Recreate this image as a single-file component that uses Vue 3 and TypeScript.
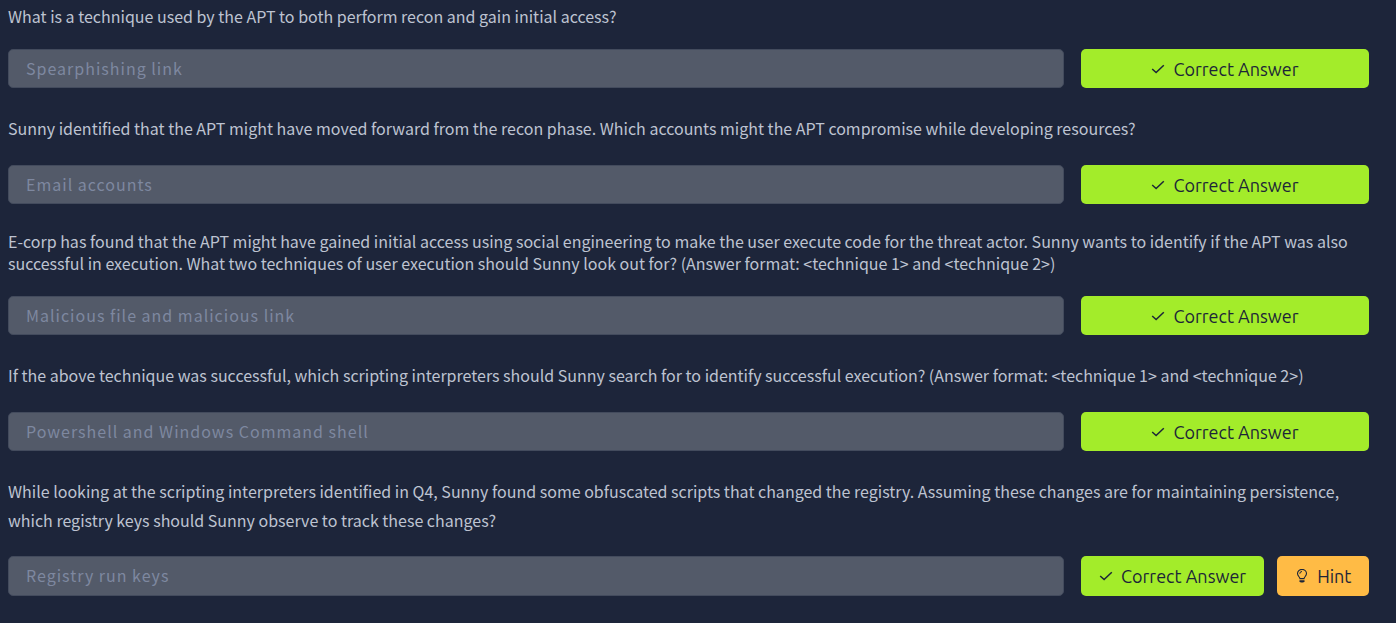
<script setup lang="ts">
interface Question {
  id: number
  text: string
  answer: string
  relaxed: boolean
  hint: boolean
}

const questions: Question[] = [
  {
    id: 1,
    text: 'What is a technique used by the APT to both perform recon and gain initial access?',
    answer: 'Spearphishing link',
    relaxed: false,
    hint: false,
  },
  {
    id: 2,
    text: 'Sunny identified that the APT might have moved forward from the recon phase. Which accounts might the APT compromise while developing resources?',
    answer: 'Email accounts',
    relaxed: true,
    hint: false,
  },
  {
    id: 3,
    text: 'E-corp has found that the APT might have gained initial access using social engineering to make the user execute code for the threat actor. Sunny wants to identify if the APT was also successful in execution. What two techniques of user execution should Sunny look out for? (Answer format: <technique 1> and <technique 2>)',
    answer: 'Malicious file and malicious link',
    relaxed: false,
    hint: false,
  },
  {
    id: 4,
    text: 'If the above technique was successful, which scripting interpreters should Sunny search for to identify successful execution? (Answer format: <technique 1> and <technique 2>)',
    answer: 'Powershell and Windows Command shell',
    relaxed: true,
    hint: false,
  },
  {
    id: 5,
    text: 'While looking at the scripting interpreters identified in Q4, Sunny found some obfuscated scripts that changed the registry. Assuming these changes are for maintaining persistence, which registry keys should Sunny observe to track these changes?',
    answer: 'Registry run keys',
    relaxed: true,
    hint: true,
  },
]
</script>

<template>
  <main class="questions">
    <form v-for="q in questions" :key="q.id" class="question" @submit.prevent>
      <label class="prompt" :class="{ relaxed: q.relaxed }" :for="`answer-${q.id}`">{{ q.text }}</label>
      <div class="row" :class="{ tall: q.hint }">
        <input :id="`answer-${q.id}`" class="answer" type="text" :placeholder="q.answer" disabled />
        <div class="actions">
          <button class="btn correct" type="submit">
            <svg class="icon" viewBox="0 0 14 14" aria-hidden="true">
              <path d="M1.2 7 5.1 10.5 12.8 3.2" fill="none" stroke="currentColor" stroke-width="1.5" />
            </svg>
            <span>Correct Answer</span>
          </button>
          <button v-if="q.hint" class="btn hint" type="button">
            <svg class="icon" viewBox="0 0 14 14" aria-hidden="true">
              <path
                d="M5 9.6C4.9 8 2.5 7.1 2.5 4.5a4.5 4.1 0 0 1 9 0C11.5 7.1 9.1 8 9 9.6Z"
                fill="none"
                stroke="currentColor"
                stroke-width="1.1"
              />
              <path d="M4.8 4.7A2.2 2.2 0 0 1 7 2.5" fill="none" stroke="currentColor" stroke-width="1" />
              <path d="M4.5 11.2h5v1L8.3 13.6H5.7L4.5 12.2Z" fill="currentColor" />
            </svg>
            <span>Hint</span>
          </button>
        </div>
      </div>
    </form>
  </main>
</template>

<style>
body {
  background: #1d253a;
}
</style>

<style scoped>
.questions {
  display: flex;
  flex-direction: column;
  gap: 26px;
  padding: 5px 27px 27px 8px;
  color: #bdc3d1;
  font-family: 'Noto Sans CJK SC', 'Source Sans Pro', sans-serif;
  font-size: 16px;
}

.question {
  display: flex;
  flex-direction: column;
}

.prompt {
  line-height: 22px;
  padding-right: 8px;
}

.prompt.relaxed {
  line-height: 29px;
}

.row {
  display: grid;
  grid-template-columns: minmax(0, 1056fr) minmax(0, 288fr);
  gap: 17px;
  height: 39px;
  margin-top: 22px;
}

.row.tall {
  height: 40px;
  margin-top: 21px;
}

.answer {
  box-sizing: border-box;
  width: 100%;
  height: 100%;
  padding: 0 17px 2px;
  border: 1px solid #434b5d;
  border-radius: 5px;
  background: #535a69;
  font-family: inherit;
  font-size: 16px;
  letter-spacing: 1px;
}

.answer::placeholder {
  color: #7e88a0;
  opacity: 1;
}

.actions {
  display: flex;
  gap: 13px;
}

.btn {
  display: flex;
  align-items: center;
  justify-content: center;
  gap: 8px;
  padding: 0 18px;
  border: 0;
  border-radius: 5px;
  color: #1c2538;
  font-family: Ubuntu, 'Noto Sans', sans-serif;
  font-size: 18px;
  white-space: nowrap;
}

.correct {
  flex: 1;
  background: #a3ec2a;
}

.hint {
  background: #ffbb45;
}

.icon {
  width: 14px;
  height: 14px;
  flex: none;
}
</style>
